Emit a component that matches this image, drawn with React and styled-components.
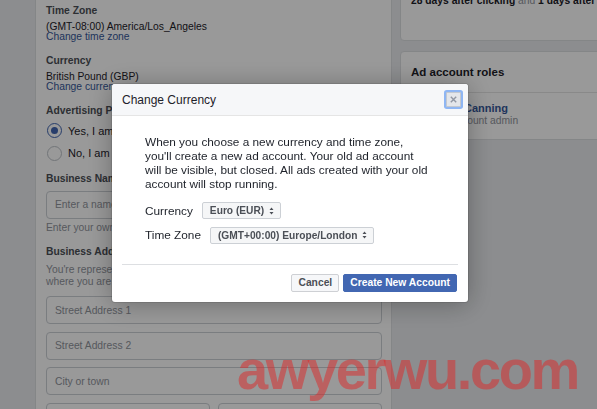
import React from "react";
import styled, { createGlobalStyle } from "styled-components";

const Global = createGlobalStyle`
  html, body { margin: 0; padding: 0; }
  body {
    background: #e9ebee;
    font-family: "Liberation Sans", Arial, sans-serif;
    width: 597px;
    height: 409px;
    overflow: hidden;
  }
`;

const Page = styled.div`
  display: flex;
  align-items: flex-start;
  gap: 8px;
  padding-left: 35px;
  height: 409px;
  overflow: hidden;
`;

const LeftPanel = styled.div`
  flex: none;
  width: 336px;
  background: #fff;
  border: 1px solid #dddfe2;
  border-top: none;
  padding: 4px 9px 40px 10px;
  font-size: 10.3px;
  color: #1d2129;
`;

const Section = styled.div`
  margin-bottom: ${(p) => p.$mb || 12.9}px;
`;

const Label = styled.div`
  font-weight: bold;
  color: #4b4f56;
  line-height: 13px;
  margin-bottom: 5.4px;
  white-space: nowrap;
`;

const Value = styled.div`
  line-height: 9.4px;
  white-space: nowrap;
`;

const Link = styled.div`
  line-height: 9.4px;
  color: #365899;
  white-space: nowrap;
`;

const RadioList = styled.div`
  display: flex;
  flex-direction: column;
  gap: 6.5px;
`;

const RadioRow = styled.div`
  display: flex;
  align-items: center;
  gap: 6px;
  height: 16px;
  white-space: nowrap;
  font-size: 11px;
`;

const RadioDot = styled.span`
  box-sizing: border-box;
  width: 15px;
  height: 15px;
  margin-left: 1px;
  border-radius: 50%;
  background: #fff;
  border: ${(p) => (p.$on ? "1.5px solid #4267b2" : "1px solid #bec3c9")};
  display: flex;
  align-items: center;
  justify-content: center;
  &::after {
    content: "";
    width: 7px;
    height: 7px;
    border-radius: 50%;
    background: ${(p) => (p.$on ? "#4267b2" : "transparent")};
  }
`;

const Input = styled.div`
  box-sizing: border-box;
  height: 28px;
  border: 1px solid #ccd0d5;
  border-radius: 4px;
  padding: 0 8px;
  display: flex;
  align-items: center;
  color: #90949c;
  font-size: 10.3px;
  white-space: nowrap;
  overflow: hidden;
`;

const Help = styled.div`
  color: #90949c;
  line-height: 12px;
  margin-top: 3.5px;
  white-space: nowrap;
`;

const InputStack = styled.div`
  display: flex;
  flex-direction: column;
  gap: 7.5px;
  margin-top: 8.3px;
`;

const HalfRow = styled.div`
  display: grid;
  grid-template-columns: 1fr 1fr;
  gap: 8px;
`;

const RightColumn = styled.div`
  flex: none;
  width: 240px;
  margin-top: -20px;
  display: flex;
  flex-direction: column;
  gap: 10px;
`;

const Card = styled.div`
  background: #fff;
  border: 1px solid #dddfe2;
  border-radius: 4px;
`;

const AttribText = styled.div`
  padding: 12px 10px 31px;
  line-height: 16px;
  font-size: 10.3px;
  color: #1d2129;
  white-space: nowrap;
  b { font-weight: bold; }
  span { color: #90949c; }
`;

const CardHeader = styled.div`
  height: 40px;
  line-height: 40px;
  padding: 0 10px;
  border-bottom: 1px solid #e5e5e5;
  font-weight: bold;
  font-size: 11.5px;
  color: #1d2129;
`;

const RoleRow = styled.div`
  display: flex;
  align-items: flex-start;
  gap: 7px;
  padding: 7px 10px;
`;

const Avatar = styled.div`
  width: 32px;
  height: 32px;
  border-radius: 50%;
  background: #c9ccd1;
`;

const RoleText = styled.div`
  margin-top: 1.5px;
  font-size: 10.3px;
  white-space: nowrap;
`;

const RoleName = styled.div`
  line-height: 13px;
  font-weight: bold;
  color: #365899;
  font-size: 11px;
`;

const RoleSub = styled.div`
  line-height: 11px;
  color: #90949c;
`;

const Overlay = styled.div`
  position: fixed;
  inset: 0;
  background: rgba(0, 0, 0, 0.4);
`;

const Modal = styled.div`
  position: fixed;
  left: 112px;
  top: 84px;
  width: 356px;
  background: #fff;
  border-radius: 3px;
  box-shadow: 0 2px 26px rgba(0, 0, 0, 0.3), 0 0 0 1px rgba(0, 0, 0, 0.1);
  overflow: hidden;
`;

const ModalHeader = styled.div`
  display: flex;
  align-items: center;
  justify-content: space-between;
  height: 31px;
  padding: 0 7px 0 10px;
  background: #f6f7f9;
  border-bottom: 1px solid #e5e5e5;
`;

const Title = styled.div`
  font-size: 12px;
  color: #1d2129;
`;

const CloseBtn = styled.div`
  width: 13px;
  height: 13px;
  background: #e4e6ea;
  border: 1px solid #c3c8d0;
  box-shadow: 0 0 0 2px #8fb6f3;
  border-radius: 1px;
  display: flex;
  align-items: center;
  justify-content: center;
`;

const ModalBody = styled.div`
  padding: 19px 20px 20px 33px;
  font-size: 11.8px;
  color: #1d2129;
`;

const Para = styled.div`
  line-height: 14px;
  white-space: nowrap;
`;

const FieldRow = styled.div`
  display: flex;
  align-items: center;
  gap: 9px;
  margin-top: ${(p) => p.$mt}px;
`;

const Select = styled.div`
  box-sizing: border-box;
  height: 17px;
  display: inline-flex;
  align-items: center;
  gap: 5px;
  padding: 0 6px 0 7px;
  background: #f5f6f7;
  border: 1px solid #ccd0d5;
  border-radius: 2px;
  font-weight: bold;
  font-size: 10.2px;
  color: #4b4f56;
  white-space: nowrap;
`;

const Divider = styled.div`
  height: 1px;
  margin: 0 10px;
  background: #dddfe2;
`;

const Footer = styled.div`
  display: flex;
  justify-content: flex-end;
  gap: 4px;
  padding: 9px 11px 10px;
`;

const Button = styled.div`
  box-sizing: border-box;
  height: 18px;
  display: flex;
  align-items: center;
  padding: 0 6px;
  border-radius: 2px;
  font-weight: bold;
  font-size: 10.3px;
  white-space: nowrap;
  border: 1px solid ${(p) => (p.$primary ? "#4267b2" : "#ced0d4")};
  background: ${(p) => (p.$primary ? "#4267b2" : "#f6f7f9")};
  color: ${(p) => (p.$primary ? "#fff" : "#4b4f56")};
`;

const Watermark = styled.div`
  position: fixed;
  left: 237px;
  top: 342px;
  font-family: "Liberation Sans", Arial, sans-serif;
  font-weight: bold;
  font-size: 56px;
  line-height: 1;
  letter-spacing: -2.4px;
  color: rgba(222, 40, 40, 0.5);
  white-space: nowrap;
  pointer-events: none;
`;

const Arrows = () => (
  <svg width="5" height="8" viewBox="0 0 5 8">
    <path d="M2.5 0.5 L4.5 3 L0.5 3 Z M2.5 7.5 L4.5 5 L0.5 5 Z" fill="#4b4f56" />
  </svg>
);

export default function App() {
  return (
    <>
      <Global />
      <Page>
        <LeftPanel>
          <Section>
            <Label>Time Zone</Label>
            <Value>(GMT-08:00) America/Los_Angeles</Value>
            <Link>Change time zone</Link>
          </Section>
          <Section>
            <Label>Currency</Label>
            <Value>British Pound (GBP)</Value>
            <Link>Change currency</Link>
          </Section>
          <Section $mb={11.3}>
            <Label>Advertising Purpose</Label>
            <RadioList>
              <RadioRow>
                <RadioDot $on />
                Yes, I am using this ad account for business purposes
              </RadioRow>
              <RadioRow>
                <RadioDot />
                No, I am using this ad account for personal purposes
              </RadioRow>
            </RadioList>
          </Section>
          <Section $mb={11.2}>
            <Label>Business Name</Label>
            <Input>Enter a name for your business</Input>
            <Help>Enter your own business name, not a client's name</Help>
          </Section>
          <Section>
            <Label>Business Address</Label>
            <Help>
              You're representing that this business address is the place
              <br />
              where you are located and conduct business.
            </Help>
            <InputStack>
              <Input>Street Address 1</Input>
              <Input>Street Address 2</Input>
              <Input>City or town</Input>
              <HalfRow>
                <Input>State</Input>
                <Input>Zip code</Input>
              </HalfRow>
            </InputStack>
          </Section>
        </LeftPanel>
        <RightColumn>
          <Card>
            <AttribText>
              <b>28 days after clicking</b> <span>and</span> <b>1 days after viewing</b>
            </AttribText>
          </Card>
          <Card>
            <CardHeader>Ad account roles</CardHeader>
            <RoleRow>
              <Avatar />
              <RoleText>
                <RoleName>Di Canning</RoleName>
                <RoleSub>Account admin</RoleSub>
              </RoleText>
            </RoleRow>
          </Card>
        </RightColumn>
      </Page>
      <Overlay />
      <Modal>
        <ModalHeader>
          <Title>Change Currency</Title>
          <CloseBtn>
            <svg width="7" height="7" viewBox="0 0 7 7">
              <path d="M0.8 0.8 L6.2 6.2 M6.2 0.8 L0.8 6.2" stroke="#9197a3" strokeWidth="1.4" />
            </svg>
          </CloseBtn>
        </ModalHeader>
        <ModalBody>
          <Para>
            When you choose a new currency and time zone,
            <br />
            you'll create a new ad account. Your old ad account
            <br />
            will be visible, but closed. All ads created with your old
            <br />
            account will stop running.
          </Para>
          <FieldRow $mt={11}>
            <span>Currency</span>
            <Select>
              Euro (EUR) <Arrows />
            </Select>
          </FieldRow>
          <FieldRow $mt={7.5}>
            <span>Time Zone</span>
            <Select>
              (GMT+00:00) Europe/London <Arrows />
            </Select>
          </FieldRow>
        </ModalBody>
        <Divider />
        <Footer>
          <Button>Cancel</Button>
          <Button $primary>Create New Account</Button>
        </Footer>
      </Modal>
      <Watermark>awyerwu.com</Watermark>
    </>
  );
}
